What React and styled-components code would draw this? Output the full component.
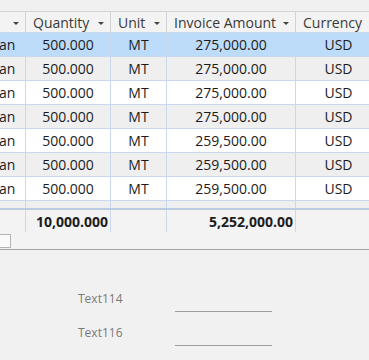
import React from "react";
import styled, { createGlobalStyle } from "styled-components";

const GlobalStyle = createGlobalStyle`
  html, body {
    margin: 0;
    padding: 0;
    background: #f1f1f1;
    font-family: "Open Sans", "Noto Sans", sans-serif;
    overflow: hidden;
  }
`;

const cols = [26, 85, 56, 129, 86];

const Page = styled.div`
  width: 369px;
  height: 360px;
  display: flex;
  flex-direction: column;
  background: #f1f1f1;
`;

const TopStrip = styled.div`
  height: 11px;
  flex: none;
  background: #f0f0f0;
`;

const Grid = styled.div`
  display: flex;
  flex-direction: column;
  flex: none;
  background: #ffffff;
  overflow: hidden;
  width: 369px;
`;

const Row = styled.div`
  display: flex;
  flex: none;
  height: ${(p) => p.h || 24}px;
  background: ${(p) => p.bg || "#ffffff"};
  border-bottom: 1px solid #c9d9ec;
  box-sizing: border-box;
`;

const HeaderRow = styled(Row)`
  background: #f3f3f3;
  border-top: 1px solid #d4d4d4;
  border-bottom: 1px solid #c9d9ec;
`;

const Cell = styled.div`
  flex: none;
  width: ${(p) => p.w}px;
  box-sizing: border-box;
  border-right: 1px solid #c9d9ec;
  display: flex;
  align-items: center;
  justify-content: ${(p) => p.align || "center"};
  padding: ${(p) => p.pad || "0"};
  font-size: 14px;
  color: #1c1c1c;
  font-weight: ${(p) => (p.bold ? 700 : 400)};
  white-space: nowrap;
  overflow: hidden;
`;

const HeadCell = styled(Cell)`
  justify-content: space-between;
  padding: 0 6px 0 7px;
  color: #3a3a3a;
  border-right: 1px solid #d2d2d2;
`;

const Arrow = styled.span`
  width: 0;
  height: 0;
  border-left: 3px solid transparent;
  border-right: 3px solid transparent;
  border-top: 3px solid #444;
  margin-top: 2px;
`;

const ClipText = styled.span`
  margin-left: -1px;
`;

const Body = styled.div`
  height: 175px;
  flex: none;
  overflow: hidden;
  display: flex;
  flex-direction: column;
`;

const Footer = styled(Row)`
  height: 24px;
  background: #f3f3f3;
  border-top: 2px solid #b8cbe2;
  border-bottom: none;
`;

const ScrollTrack = styled.div`
  height: 17px;
  flex: none;
  background: #f3f3f3;
  border-bottom: 1px solid #a2a2a2;
  display: flex;
  align-items: center;
`;

const Thumb = styled.div`
  width: 11px;
  height: 14px;
  background: #fafafa;
  border: 1px solid #b4b4b4;
  border-left: none;
  box-sizing: border-box;
`;

const Form = styled.div`
  display: grid;
  grid-template-columns: 97px 97px;
  row-gap: 14px;
  padding: 42px 0 0 78px;
`;

const Label = styled.div`
  font-size: 12px;
  color: #7a7a7a;
  height: 20px;
  line-height: 14px;
`;

const Field = styled.div`
  height: 20px;
  box-sizing: border-box;
  border-bottom: 1px solid #9d9d9d;
  width: 97px;
`;

const rows = [
  { q: "500.000", amt: "275,000.00", bg: "#bcdcfa" },
  { q: "500.000", amt: "275,000.00", bg: "#efefef" },
  { q: "500.000", amt: "275,000.00", bg: "#ffffff" },
  { q: "500.000", amt: "275,000.00", bg: "#efefef" },
  { q: "500.000", amt: "259,500.00", bg: "#ffffff" },
  { q: "500.000", amt: "259,500.00", bg: "#efefef" },
  { q: "500.000", amt: "259,500.00", bg: "#ffffff" },
  { q: "500.000", amt: "259,500.00", bg: "#efefef" },
];

const headers = ["", "Quantity", "Unit", "Invoice Amount", "Currency"];

export default function App() {
  return (
    <Page>
      <GlobalStyle />
      <TopStrip />
      <Grid>
        <HeaderRow h={22}>
          {headers.map((h, i) => (
            <HeadCell key={i} w={cols[i]}>
              <span>{h}</span>
              {i < 4 && <Arrow />}
            </HeadCell>
          ))}
        </HeaderRow>
        <Body>
          {rows.map((r, i) => (
            <Row key={i} bg={r.bg}>
              <Cell w={cols[0]} align="flex-start">
                <ClipText>an</ClipText>
              </Cell>
              <Cell w={cols[1]}>{r.q}</Cell>
              <Cell w={cols[2]}>MT</Cell>
              <Cell w={cols[3]}>{r.amt}</Cell>
              <Cell w={cols[4]}>USD</Cell>
            </Row>
          ))}
        </Body>
        <Footer>
          <Cell w={cols[0]} />
          <Cell w={cols[1]} align="flex-end" pad="0 2px 0 0" bold>
            10,000.000
          </Cell>
          <Cell w={cols[2]} />
          <Cell w={cols[3]} align="flex-end" pad="0 2px 0 0" bold>
            5,252,000.00
          </Cell>
          <Cell w={cols[4]} />
        </Footer>
        <ScrollTrack>
          <Thumb />
        </ScrollTrack>
      </Grid>
      <Form>
        <Label>Text114</Label>
        <Field />
        <Label>Text116</Label>
        <Field />
      </Form>
    </Page>
  );
}
